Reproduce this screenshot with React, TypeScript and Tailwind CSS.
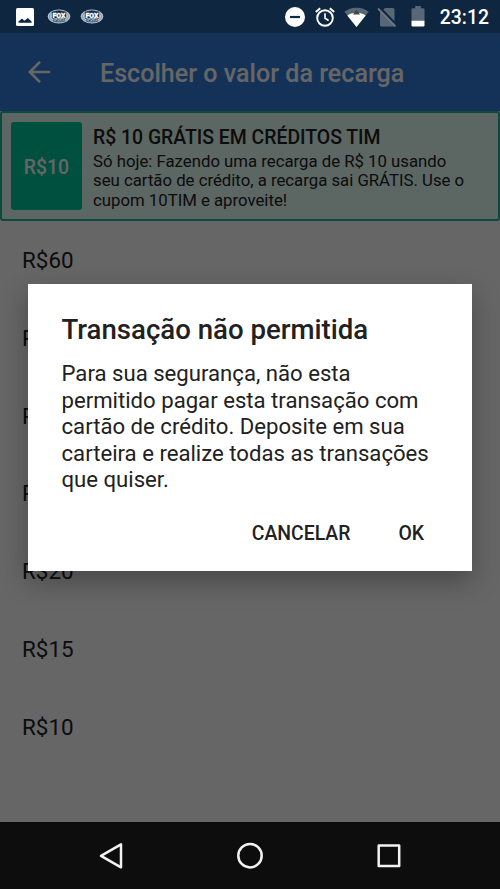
const amounts = ['R$60', 'R$50', 'R$40', 'R$30', 'R$20', 'R$15', 'R$10'];

const FoxSports = () => (
    <svg className="h-[15px] w-[24px]" viewBox="0 0 24 15">
        <ellipse cx="12" cy="7.5" rx="11.3" ry="7.1" fill="#bac6d3" />
        <ellipse cx="12" cy="7.5" rx="9.6" ry="5.9" fill="none" stroke="#4c627c" strokeWidth="0.5" />
        <path d="M4.8 2.8 12 1.6l7.2 1.2v6.4l-1.7 1v2.2h-11v-2.2l-1.7-1z" fill="#142c49" />
        <text x="12" y="8.9" textAnchor="middle" textLength="13" lengthAdjust="spacingAndGlyphs" fontSize="7.8" fontWeight="900" fill="#fff" stroke="#fff" strokeWidth="0.3">FOX</text>
        <text x="12" y="12" textAnchor="middle" textLength="10" lengthAdjust="spacingAndGlyphs" fontSize="3.2" fontWeight="700" fill="#dce3ea">SPORTS</text>
    </svg>
);

const StatusBar = () => (
    <div className="flex h-[33px] shrink-0 items-center bg-[#0f2640] pl-4 pr-[11px] text-white">
        <svg className="h-[18px] w-[18px]" viewBox="0 0 18 18">
            <rect width="18" height="18" rx="1.5" fill="#fff" />
            <path d="M2.5 14.8v-1.3l3.5-3 2.400 2.300L11.800 10l3.800 3.600v1.200z" fill="#0f2640" />
        </svg>
        <div className="ml-[12.5px] flex gap-[9px]">
            <FoxSports />
            <FoxSports />
        </div>
        <div className="ml-auto flex items-center pt-px">
            {/* Do not disturb */}
            <svg className="h-5 w-5" viewBox="0 0 20 20">
                <circle cx="10" cy="10" r="10" fill="#fff" />
                <path d="M5 10h10" stroke="#0f2640" strokeWidth="2.2" />
            </svg>
            {/* Alarm */}
            <svg className="ml-[10px] h-5 w-5" viewBox="0 0 20 20" fill="none" stroke="#fff" strokeWidth="1.9">
                <circle cx="10" cy="11" r="7.8" />
                <path d="M10 6.2v5.1l3.6 2.2" strokeWidth="1.6" />
                <path d="m.8 5 4.4-3.8M19.2 5l-4.4-3.8" />
            </svg>
            {/* Wi-Fi */}
            <svg className="ml-[9px] h-[20px] w-[25px]" viewBox="0 0 25 20">
                <path d="M12.5 20 .3 4.8C3.4 2.3 7.7.7 12.5.7s9.1 1.6 12.2 4.1z" fill="#586778" />
                <path d="M12.5 20 3.3 8.5c2.5-1.8 5.6-2.8 9.2-2.8s6.7 1 9.200 2.800z" fill="#fff" />
                <path d="m12.5 2.800 3.500 4.600H9z" fill="#42464a" />
            </svg>
            {/* No SIM */}
            <svg className="ml-[8px] h-[20px] w-[20px]" viewBox="0 0 20 20">
                <path d="M8 1h8a1.5 1.5 0 0 1 1.5 1.5V18a1.5 1.5 0 0 1-1.5 1.5H4.5A1.5 1.5 0 0 1 3 18V6z" fill="#586778" />
                <path d="m2.200.2 17.500 18" stroke="#0f2640" strokeWidth="2.6" />
                <path d="m1 1.500 17.500 18" stroke="#697786" strokeWidth="1.8" />
            </svg>
            {/* Battery */}
            <svg className="ml-[14px] h-[21px] w-[14px]" viewBox="0 0 14 21">
                <path d="M4.2 0h5.6v2.2h2.5q1.2 0 1.2 1.2V15H.5V3.4q0-1.2 1.2-1.2h2.5z" fill="#586778" />
                <path d="M.5 14.8h13v4.5q0 1.2-1.2 1.2H1.7q-1.2 0-1.2-1.2z" fill="#fff" />
            </svg>
            <span className="ml-[14.5px] pt-[2px] text-[19.4px] font-medium">23:12</span>
        </div>
    </div>
);

const AppBar = () => (
    <header className="flex h-[78px] shrink-0 items-center bg-[#327edb] pl-[28px]">
        <svg className="h-[22px] w-[22px]" viewBox="0 0 22 22" fill="none" stroke="#fff" strokeWidth="2.6">
            <path d="M22 11H2M12 .8 1.8 11 12 21.2" />
        </svg>
        <h1 className="ml-[50px] whitespace-nowrap pt-[3px] text-[25.1px] font-medium text-white">Escolher o valor da recarga</h1>
    </header>
);

const PromoCard = () => (
    <div className="flex h-[110px] shrink-0 rounded-[3px] border-2 border-[#1fb79b] bg-[#e6fff7] pl-[9px] pt-[9px] text-[#212121]">
        <div className="flex h-[88px] w-[71px] items-center justify-center rounded-[3px] bg-[#00c8a0] pt-[3px] text-[19.4px] font-medium text-white">
            R$10
        </div>
        <div className="ml-[11px] whitespace-nowrap">
            <h2 className="mt-[3px] text-[19.4px] font-medium leading-[26px]">R$ 10 GRÁTIS EM CRÉDITOS TIM</h2>
            <p className="pt-[0.5px] text-[16.75px] leading-[19.6px]">
                Só hoje: Fazendo uma recarga de R$ 10 usando<br />
                seu cartão de crédito, a recarga sai GRÁTIS. Use o<br />
                cupom 10TIM e aproveite!
            </p>
        </div>
    </div>
);

const Dialog = () => (
    <div className="h-[287px] w-[444px] bg-white pl-[33.5px] pr-[48px] text-[#212121] shadow-[0_10px_26px_rgba(0,0,0,0.3)]">
        <h2 className="whitespace-nowrap pt-[28px] text-[27.6px] font-medium leading-[36px]">Transação não permitida</h2>
        <p className="mt-[12.4px] whitespace-nowrap text-[22.15px] leading-[26.4px]">
            Para sua segurança, não esta<br />
            permitido pagar esta transação com<br />
            cartão de crédito. Deposite em sua<br />
            carteira e realize todas as transações<br />
            que quiser.
        </p>
        <div className="mt-[28.6px] flex justify-end gap-[48px] text-[19.4px] font-medium leading-[26px]">
            <button>CANCELAR</button>
            <button>OK</button>
        </div>
    </div>
);

const NavBar = () => (
    <nav className="flex h-[67px] shrink-0 items-center justify-between bg-[#0d0d0d] px-[98px]">
        <svg className="h-7 w-7" viewBox="0 0 28 28" fill="none" stroke="#f2f2f2" strokeWidth="2.5" strokeLinejoin="round">
            <path d="M23 2.3v23L3 13.8z" />
        </svg>
        <svg className="h-7 w-7" viewBox="0 0 28 28" fill="none" stroke="#f2f2f2" strokeWidth="2.5">
            <circle cx="14" cy="13.7" r="11.7" />
        </svg>
        <svg className="h-7 w-7" viewBox="0 0 28 28" fill="none" stroke="#f2f2f2" strokeWidth="2.5" strokeLinejoin="round">
            <rect x="4.7" y="3.4" width="20.5" height="20.5" />
        </svg>
    </nav>
);

export default function App() {
    return (
        <div className="flex h-[889px] w-[500px] flex-col overflow-hidden bg-white font-[Roboto,sans-serif]">
            <StatusBar />
            <main className="relative flex min-h-0 flex-1 flex-col overflow-hidden">
                <AppBar />
                <PromoCard />
                <ul className="pt-px text-[22.4px] text-[#212121]">
                    {amounts.map((amount) => (
                        <li key={amount} className="flex h-[77.8px] items-center pl-[22px]">{amount}</li>
                    ))}
                </ul>
                {/* Scrim and dialog */}
                <div className="absolute inset-0 flex items-start justify-center bg-black/60 pt-[251px]">
                    <Dialog />
                </div>
            </main>
            <NavBar />
        </div>
    );
}
